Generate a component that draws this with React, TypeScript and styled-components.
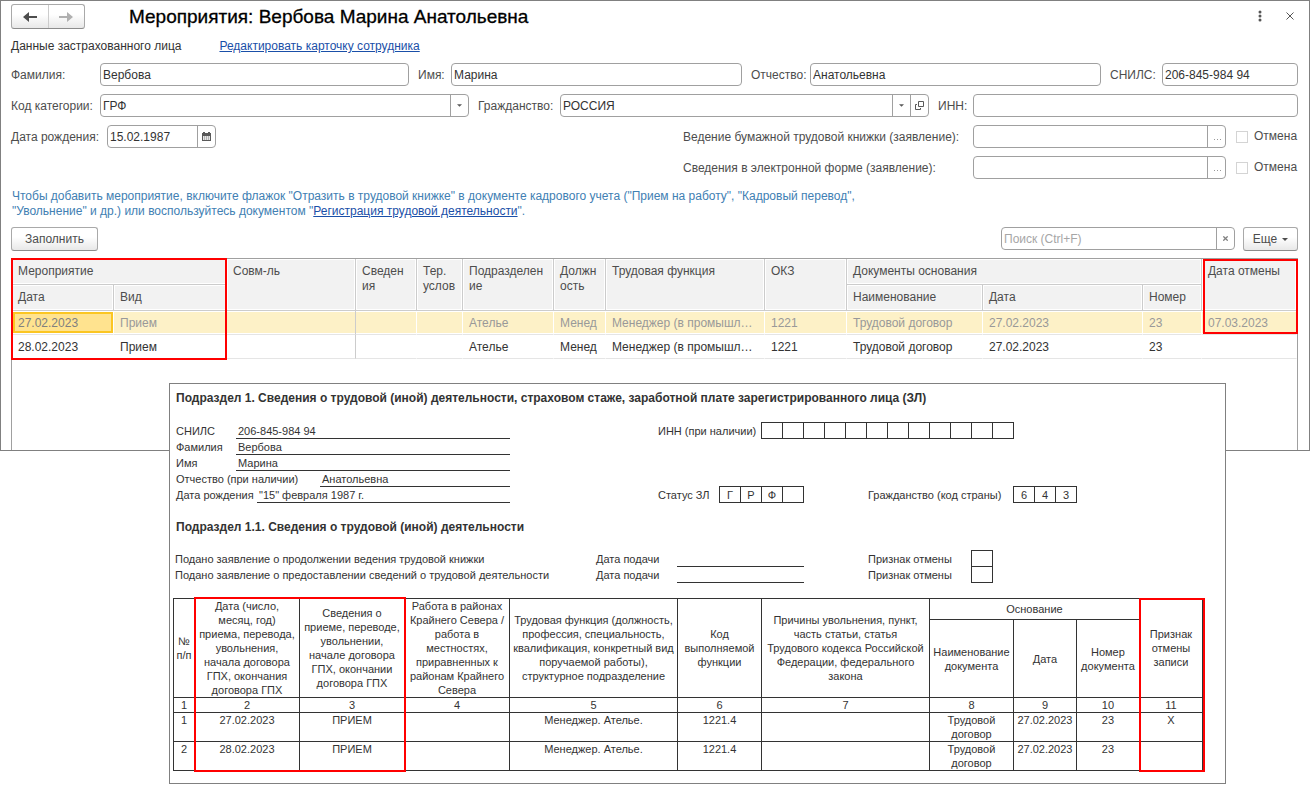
import React from "react";
import styled, { createGlobalStyle, css } from "styled-components";

const Global = createGlobalStyle`
  *, *::before, *::after { box-sizing: border-box; }
  body {
    margin: 0;
    background: #fff;
    color: #333;
    font-family: "Liberation Sans", Arial, sans-serif;
    font-size: 12px;
    line-height: 15px;
  }
  button, input, select { font: inherit; color: inherit; margin: 0; }
`;

/* ---------- application window ---------- */

const Window = styled.main`
  border: 1px solid #808080;
  padding: 3px 11px 0 10px;
  background: #fff;
`;

const TitleBar = styled.header`
  display: flex;
  align-items: center;
  height: 25px;
`;

const raised = css`
  border: 1px solid #a9a9a9;
  border-bottom-color: #8c8c8c;
  border-radius: 3px;
  background: linear-gradient(#fff 40%, #e8e8e8);
`;

const NavGroup = styled.div`
  ${raised}
  display: flex;
  width: 74px;
  height: 25px;
`;

const NavButton = styled.button`
  flex: 1;
  display: flex;
  align-items: center;
  justify-content: center;
  padding: 0;
  border: 0;
  background: none;
  color: #4d4d4d;

  & + & {
    border-left: 1px solid #ccc;
    color: #b0b0b0;
  }
`;

const Title = styled.h1`
  flex: 1;
  margin: 0 0 0 44px;
  font-size: 19px;
  line-height: 24px;
  font-weight: 400;
  color: #000;
  -webkit-text-stroke: 0.3px #000;
`;

const IconButton = styled.button`
  display: flex;
  align-items: center;
  justify-content: center;
  width: 16px;
  height: 20px;
  padding: 0;
  border: 0;
  background: none;
  color: #555;
`;

const WindowTools = styled.div`
  display: flex;
  gap: 14px;
  padding-bottom: 2px;
`;

const SectionRow = styled.div`
  display: flex;
  align-items: center;
  gap: 38px;
  height: 34px;
  padding-top: 1px;
`;

const Link = styled.a`
  color: #1a4fa8;
  text-decoration: underline;
`;

/* ---------- form ---------- */

const Form = styled.form`
  display: flex;
  flex-direction: column;
  gap: 8px;
`;

const FormRow = styled.div<{ $columns: string }>`
  display: grid;
  grid-template-columns: ${(p) => p.$columns};
  align-items: center;
`;

const Label = styled.label<{ $start?: boolean }>`
  padding-top: 1px;
  padding-left: ${(p) => (p.$start ? 0 : 9)}px;
  color: #4d4d4d;
  white-space: nowrap;
`;

const Field = styled.div`
  display: flex;
  min-width: 0;
  height: 23px;
  border: 1px solid #a0a0a0;
  border-radius: 4px;
  background: #fff;
`;

const fieldText = css`
  flex: 1;
  min-width: 0;
  width: 100%;
  padding: 2px 2px 0;
  border: 0;
  outline: 0;
  background: none;
`;

const TextInput = styled.input`
  ${fieldText}
  &::placeholder { color: #a6a6a6; opacity: 1; }
`;

const Select = styled.select`
  ${fieldText}
  appearance: none;
`;

const FieldButton = styled.button`
  display: flex;
  align-items: center;
  justify-content: center;
  width: 18px;
  padding: 0;
  border: 0;
  border-left: 1px solid #a0a0a0;
  background: none;
  color: #595959;
`;

const CheckLabel = styled.label`
  display: flex;
  align-items: center;
  gap: 6px;
  padding-left: 10px;
  color: #4d4d4d;
`;

const CheckBox = styled.input`
  appearance: none;
  width: 12px;
  height: 12px;
  border: 1px solid #d4d4d4;
  background: #fff;
`;

const Hint = styled.p`
  margin: 10px 0 8px;
  padding-left: 1px;
  color: #4180b3;
`;

const Toolbar = styled.div`
  display: flex;
  align-items: flex-start;
  gap: 8px;
  height: 24px;
  margin-bottom: 7px;
`;

const PushButton = styled.button<{ $width: number }>`
  ${raised}
  display: flex;
  align-items: center;
  justify-content: center;
  gap: 5px;
  width: ${(p) => p.$width}px;
  height: 24px;
  padding: 0;
  color: #4d4d4d;
`;

const SearchField = styled(Field)`
  width: 234px;
  margin-left: auto;
`;

/* ---------- table of events ---------- */

const TableBox = styled.div`
  min-height: 192px;
  border: 1px solid #a0a0a0;
  border-bottom: 0;
`;

const EventTable = styled.table`
  width: 100%;
  table-layout: fixed;
  border-collapse: separate;
  border-spacing: 0;
`;

const HeadCell = styled.th<{ $last?: boolean }>`
  position: relative;
  height: 26px;
  padding: 5px 0 0 6px;
  border-right: 1px solid ${(p) => (p.$last ? "#fff" : "#ccc")};
  border-bottom: 1px solid #ccc;
  background: #f2f2f2;
  box-shadow: inset 0 0 0 1px #fff;
  color: #4d4d4d;
  font-weight: 400;
  text-align: left;
  vertical-align: top;
  white-space: nowrap;
`;

const BodyCell = styled.td<{ $line?: boolean; $current?: boolean }>`
  height: 24px;
  padding: 2px 0 0 6px;
  border-right: 1px solid ${(p) => (p.$line ? "#ccc" : "#fff")};
  border-bottom: 1px solid #e5e5e5;
  white-space: nowrap;
  overflow: hidden;
`;

const EventRow = styled.tr<{ $selected?: boolean }>`
  ${(p) =>
    p.$selected &&
    css`
      color: #999;
      ${BodyCell} {
        background: #fdf1c7;
        box-shadow: inset 0 1px #fff, inset 0 -1px #fff;
      }
      ${BodyCell}:first-child {
        background: #ffe38f;
        color: #808080;
        box-shadow: inset 1px 1px #fff, inset 0 -1px #fff,
          inset 3px 3px #fbc623, inset -2px -3px #fbc623;
      }
    `}
`;

/* Red highlight over the cells, starting from the header cell that holds it */
const Frame = styled.span<{
  $span?: number;
  $height: number;
  $top: number;
  $side: number;
  $extra?: number;
}>`
  position: absolute;
  z-index: 1;
  top: ${(p) => p.$top}px;
  left: ${(p) => p.$side}px;
  width: calc(${(p) => p.$span ?? 1} * 100% + ${(p) => (p.$extra ?? 1) - p.$side}px);
  height: ${(p) => p.$height}px;
  border: 2px solid #f00;
  pointer-events: none;
`;

/* ---------- printed report ---------- */

const Report = styled.article`
  position: relative;
  margin: -68px 84px 0 169px;
  padding: 7px 22px 12px 3px;
  border: 1px solid #808080;
  background: #fff;
  font-size: 11px;
  line-height: 14px;
`;

const ReportHeading = styled.h2`
  margin: 0 0 16px;
  padding-left: 3px;
  font-size: 12px;
  line-height: 15px;
  font-weight: 700;
`;

const Requisites = styled.section`
  display: flex;
  justify-content: space-between;
  height: 81px;
  margin-bottom: 17px;
  padding: 0 126px 0 3px;
`;

const Person = styled.dl`
  width: 334px;
  margin: 1px 0 0;
`;

const PersonRow = styled.div`
  display: flex;
  height: 16px;
`;

const Term = styled.dt<{ $width: number }>`
  width: ${(p) => p.$width}px;
  line-height: 16px;
  white-space: nowrap;
`;

const Value = styled.dd`
  flex: 1;
  margin: 0;
  padding-left: 2px;
  border-bottom: 1px solid #333;
  line-height: 16px;
`;

const Codes = styled.div`
  display: flex;
  flex-direction: column;
  justify-content: space-between;
  width: 419px;
`;

const CodeRow = styled.div`
  display: flex;
  align-items: center;
`;

const CodeLabel = styled.span<{ $width: number; $gap?: number }>`
  width: ${(p) => p.$width}px;
  margin-left: ${(p) => p.$gap ?? 0}px;
  white-space: nowrap;
`;

const Cells = styled.span`
  display: flex;
  height: 17px;
  border: 1px solid #333;
  border-left: 0;
`;

const Cell = styled.span`
  width: 21px;
  border-left: 1px solid #333;
  line-height: 16px;
  text-align: center;
`;

const Application = styled.div`
  display: grid;
  grid-template-columns: 421px 81px 127px 64px 103px 22px;
  height: 16px;
  padding-left: 2px;
  line-height: 16px;
  white-space: nowrap;
`;

const Underline = styled.span`
  border-bottom: 1px solid #333;
`;

const FlagCell = styled.span`
  height: 17px;
  margin-top: -1px;
  border: 1px solid #333;
`;

const ReportTable = styled.table`
  width: 100%;
  margin-top: 15px;
  table-layout: fixed;
  border-collapse: collapse;
  text-align: center;

  th, td {
    position: relative;
    padding: 0;
    border: 1px solid #333;
    font-weight: 400;
    white-space: nowrap;
  }
  td { vertical-align: top; }
`;

const ReportRow = styled.tr<{ $height: number }>`
  height: ${(p) => p.$height}px;
`;

/* ---------- icons ---------- */

const ArrowIcon = ({ right }: { right?: boolean }) => (
  <svg width="14" height="10" viewBox="0 0 14 10" transform={right ? "scale(-1 1)" : undefined}>
    <path d="M0 5 L6 0 V4 H14 V6 H6 V10 Z" fill="currentColor" />
  </svg>
);

const DropIcon = ({ size = 5 }: { size?: number }) => (
  <svg width={size} height="3" viewBox="0 0 6 3">
    <path d="M0 0 H6 L3 3 Z" fill="currentColor" />
  </svg>
);

const OpenIcon = () => (
  <svg width="9" height="9" viewBox="0 0 9 9" fill="none" stroke="currentColor">
    <path d="M3.5 0.5 H8.5 V5.5 H3.5 Z M2 3.5 H0.5 V8.5 H5.5 V7" />
  </svg>
);

const CalendarIcon = () => (
  <svg width="9" height="9" viewBox="0 0 9 9">
    <path d="M1 0 H3 V1 H6 V0 H8 V1 H9 V9 H0 V1 H1 Z" fill="#595959" />
    <path d="M1 4 H8 V8 H1 Z" fill="#e6e6e6" />
    <path d="M2 4 H3 V8 H2 Z M4 4 H5 V8 H4 Z M6 4 H7 V8 H6 Z" fill="#b3b3b3" />
  </svg>
);

const DotsIcon = ({ vertical }: { vertical?: boolean }) =>
  vertical ? (
    <svg width="4" height="12" viewBox="0 0 4 12" fill="currentColor">
      <circle cx="2" cy="2" r="1.5" />
      <circle cx="2" cy="6" r="1.5" />
      <circle cx="2" cy="10" r="1.5" />
    </svg>
  ) : (
    <svg width="8" height="7" viewBox="0 0 8 7" fill="#999">
      <path d="M1 6 H2 V7 H1 Z M4 6 H5 V7 H4 Z M7 6 H8 V7 H7 Z" />
    </svg>
  );

const CrossIcon = ({ size, color = "currentColor", weight = 1 }: { size: number; color?: string; weight?: number }) => (
  <svg width={size} height={size} viewBox="0 0 8 8" stroke={color} strokeWidth={weight}>
    <path d="M0.5 0.5 L7.5 7.5 M7.5 0.5 L0.5 7.5" />
  </svg>
);

/* ---------- data ---------- */

const eventColumns = [102, 113, 129, 61, 46, 91, 52, 159, 82, 136, 160, 59, 95];

const events = [
  ["27.02.2023", "Прием", "", "", "", "Ателье", "Менед", "Менеджер (в промышл…", "1221", "Трудовой договор", "27.02.2023", "23", "07.03.2023"],
  ["28.02.2023", "Прием", "", "", "", "Ателье", "Менед", "Менеджер (в промышл…", "1221", "Трудовой договор", "27.02.2023", "23", ""],
];

const reportColumns = [21, 105, 105, 105, 168, 84, 168, 84, 63, 63, 63];

const reportRows = [
  ["1", "27.02.2023", "ПРИЕМ", "", "Менеджер. Ателье.", "1221.4", "", "Трудовой\nдоговор", "27.02.2023", "23", "X"],
  ["2", "28.02.2023", "ПРИЕМ", "", "Менеджер. Ателье.", "1221.4", "", "Трудовой\nдоговор", "27.02.2023", "23", ""],
];

const person: [string, number, string][] = [
  ["СНИЛС", 60, "206-845-984 94"],
  ["Фамилия", 60, "Вербова"],
  ["Имя", 60, "Марина"],
  ["Отчество (при наличии)", 144, "Анатольевна"],
  ["Дата рождения", 81, "\"15\" февраля 1987 г."],
];

const applications = [
  "Подано заявление о продолжении ведения трудовой книжки",
  "Подано заявление о предоставлении сведений о трудовой деятельности",
];

const Lines = ({ text }: { text: string }) => (
  <>
    {text.split("\n").map((line, i) => (
      <React.Fragment key={i}>
        {i > 0 && <br />}
        {line}
      </React.Fragment>
    ))}
  </>
);

const Columns = ({ widths }: { widths: number[] }) => {
  const total = widths.reduce((a, b) => a + b, 0);
  return (
    <colgroup>
      {widths.map((w, i) => (
        <col key={i} style={{ width: `${(w / total) * 100}%` }} />
      ))}
    </colgroup>
  );
};

const CodeCells = ({ value }: { value: string[] }) => (
  <Cells>
    {value.map((c, i) => (
      <Cell key={i}>{c}</Cell>
    ))}
  </Cells>
);

const Statement = ({ id, label }: { id: string; label: string }) => (
  <FormRow $columns="96px 109px 1fr 299px 253px 72px">
    {id === "paper" ? (
      <>
        <Label $start htmlFor="birth">Дата рождения:</Label>
        <Field>
          <TextInput id="birth" defaultValue="15.02.1987" />
          <FieldButton type="button" aria-label="Календарь"><CalendarIcon /></FieldButton>
        </Field>
        <span />
      </>
    ) : (
      <>
        <span /><span /><span />
      </>
    )}
    <Label htmlFor={id}>{label}</Label>
    <Field>
      <TextInput id={id} />
      <FieldButton type="button" aria-label="Выбрать"><DotsIcon /></FieldButton>
    </Field>
    <CheckLabel><CheckBox type="checkbox" />Отмена</CheckLabel>
  </FormRow>
);

export default function App() {
  return (
    <>
      <Global />
      <Window>
        <TitleBar>
          <NavGroup>
            <NavButton aria-label="Назад"><ArrowIcon /></NavButton>
            <NavButton aria-label="Вперед"><ArrowIcon right /></NavButton>
          </NavGroup>
          <Title>Мероприятия: Вербова Марина Анатольевна</Title>
          <WindowTools>
            <IconButton aria-label="Действия"><DotsIcon vertical /></IconButton>
            <IconButton aria-label="Закрыть"><CrossIcon size={8} /></IconButton>
          </WindowTools>
        </TitleBar>
        <SectionRow>
          <span>Данные застрахованного лица</span>
          <Link href="#card">Редактировать карточку сотрудника</Link>
        </SectionRow>

        <Form>
          <FormRow $columns="89px 309fr 42px 291fr 68px 291fr 61px 136fr">
            <Label $start htmlFor="surname">Фамилия:</Label>
            <Field><TextInput id="surname" defaultValue="Вербова" /></Field>
            <Label htmlFor="name">Имя:</Label>
            <Field><TextInput id="name" defaultValue="Марина" /></Field>
            <Label htmlFor="patronymic">Отчество:</Label>
            <Field><TextInput id="patronymic" defaultValue="Анатольевна" /></Field>
            <Label htmlFor="snils">СНИЛС:</Label>
            <Field><TextInput id="snils" defaultValue="206-845-984 94" /></Field>
          </FormRow>
          <FormRow $columns="89px 369fr 91px 369fr 44px 325fr">
            <Label $start htmlFor="category">Код категории:</Label>
            <Field>
              <Select id="category"><option>ГРФ</option></Select>
              <FieldButton type="button" aria-label="Список"><DropIcon /></FieldButton>
            </Field>
            <Label htmlFor="country">Гражданство:</Label>
            <Field>
              <Select id="country"><option>РОССИЯ</option></Select>
              <FieldButton type="button" aria-label="Список"><DropIcon /></FieldButton>
              <FieldButton type="button" aria-label="Открыть"><OpenIcon /></FieldButton>
            </Field>
            <Label htmlFor="inn">ИНН:</Label>
            <Field><TextInput id="inn" /></Field>
          </FormRow>
          <Statement id="paper" label="Ведение бумажной трудовой книжки (заявление):" />
          <Statement id="electronic" label="Сведения в электронной форме (заявление):" />
        </Form>

        <Hint>
          Чтобы добавить мероприятие, включите флажок "Отразить в трудовой книжке" в документе кадрового учета ("Прием на работу", "Кадровый перевод",
          <br />
          "Увольнение" и др.) или воспользуйтесь документом "<Link href="#registration">Регистрация трудовой деятельности</Link>".
        </Hint>

        <Toolbar>
          <PushButton $width={87}>Заполнить</PushButton>
          <SearchField>
            <TextInput type="text" aria-label="Поиск" placeholder="Поиск (Ctrl+F)" />
            <FieldButton type="button" aria-label="Очистить"><CrossIcon size={5} weight={2} color="#808080" /></FieldButton>
          </SearchField>
          <PushButton $width={55}>Еще <DropIcon size={6} /></PushButton>
        </Toolbar>

        <TableBox>
          <EventTable>
            <Columns widths={eventColumns} />
            <thead>
              <tr>
                <HeadCell colSpan={2}>Мероприятие<Frame $top={-1} $side={-1} $height={102} /></HeadCell>
                <HeadCell rowSpan={2}>Совм-ль</HeadCell>
                <HeadCell rowSpan={2}>Сведен<br />ия</HeadCell>
                <HeadCell rowSpan={2}>Тер.<br />услов</HeadCell>
                <HeadCell rowSpan={2}>Подразделен<br />ие</HeadCell>
                <HeadCell rowSpan={2}>Должн<br />ость</HeadCell>
                <HeadCell rowSpan={2}>Трудовая функция</HeadCell>
                <HeadCell rowSpan={2}>ОКЗ</HeadCell>
                <HeadCell colSpan={3}>Документы основания</HeadCell>
                <HeadCell rowSpan={2} $last>Дата отмены<Frame $top={0} $side={1} $extra={2} $height={75} /></HeadCell>
              </tr>
              <tr>
                <HeadCell>Дата</HeadCell>
                <HeadCell>Вид</HeadCell>
                <HeadCell>Наименование</HeadCell>
                <HeadCell>Дата</HeadCell>
                <HeadCell>Номер</HeadCell>
              </tr>
            </thead>
            <tbody>
              {events.map((row, r) => (
                <EventRow key={r} $selected={r === 0}>
                  {row.map((text, i) => (
                    <BodyCell key={i} $line={i === 1 || i === 2}>{text}</BodyCell>
                  ))}
                </EventRow>
              ))}
            </tbody>
          </EventTable>
        </TableBox>
      </Window>

      <Report>
        <ReportHeading>
          Подраздел 1. Сведения о трудовой (иной) деятельности, страховом стаже, заработной плате зарегистрированного лица (ЗЛ)
        </ReportHeading>
        <Requisites>
          <Person>
            {person.map(([term, width, value]) => (
              <PersonRow key={term}>
                <Term $width={width}>{term}</Term>
                <Value>{value}</Value>
              </PersonRow>
            ))}
          </Person>
          <Codes>
            <CodeRow>
              <CodeLabel $width={103}>ИНН (при наличии)</CodeLabel>
              <CodeCells value={Array(12).fill("")} />
            </CodeRow>
            <CodeRow>
              <CodeLabel $width={61}>Статус ЗЛ</CodeLabel>
              <CodeCells value={["Г", "Р", "Ф", ""]} />
              <CodeLabel $width={145} $gap={64}>Гражданство (код страны)</CodeLabel>
              <CodeCells value={["6", "4", "3"]} />
            </CodeRow>
          </Codes>
        </Requisites>
        <ReportHeading>Подраздел 1.1. Сведения о трудовой (иной) деятельности</ReportHeading>
        {applications.map((text) => (
          <Application key={text}>
            <span>{text}</span>
            <span>Дата подачи</span>
            <Underline />
            <span />
            <span>Признак отмены</span>
            <FlagCell />
          </Application>
        ))}
        <ReportTable>
          <Columns widths={reportColumns} />
          <thead>
            <ReportRow $height={21}>
              <th rowSpan={2}><Lines text={"№\nп/п"} /></th>
              <th rowSpan={2}>
                <Lines text={"Дата (число,\nмесяц, год)\nприема, перевода,\nувольнения,\nначала договора\nГПХ, окончания\nдоговора ГПХ"} />
                <Frame $top={-2} $side={-1} $span={2} $extra={3} $height={175} />
              </th>
              <th rowSpan={2}><Lines text={"Сведения о\nприеме, переводе,\nувольнении,\nначале договора\nГПХ, окончании\nдоговора ГПХ"} /></th>
              <th rowSpan={2}><Lines text={"Работа в районах\nКрайнего Севера /\nработа в\nместностях,\nприравненных к\nрайонам Крайнего\nСевера"} /></th>
              <th rowSpan={2}><Lines text={"Трудовая функция (должность,\nпрофессия, специальность,\nквалификация, конкретный вид\nпоручаемой работы),\nструктурное подразделение"} /></th>
              <th rowSpan={2}><Lines text={"Код\nвыполняемой\nфункции"} /></th>
              <th rowSpan={2}><Lines text={"Причины увольнения, пункт,\nчасть статьи, статья\nТрудового кодекса Российской\nФедерации, федерального\nзакона"} /></th>
              <th colSpan={3}>Основание</th>
              <th rowSpan={2}>
                <Lines text={"Признак\nотмены\nзаписи"} />
                <Frame $top={-1} $side={-1} $extra={3} $height={174} />
              </th>
            </ReportRow>
            <ReportRow $height={78}>
              <th><Lines text={"Наименование\nдокумента"} /></th>
              <th>Дата</th>
              <th><Lines text={"Номер\nдокумента"} /></th>
            </ReportRow>
            <ReportRow $height={15}>
              {reportColumns.map((_, i) => (
                <th key={i}>{i + 1}</th>
              ))}
            </ReportRow>
          </thead>
          <tbody>
            {reportRows.map((row, r) => (
              <ReportRow key={r} $height={29}>
                {row.map((text, i) => (
                  <td key={i}><Lines text={text} /></td>
                ))}
              </ReportRow>
            ))}
          </tbody>
        </ReportTable>
      </Report>
    </>
  );
}
